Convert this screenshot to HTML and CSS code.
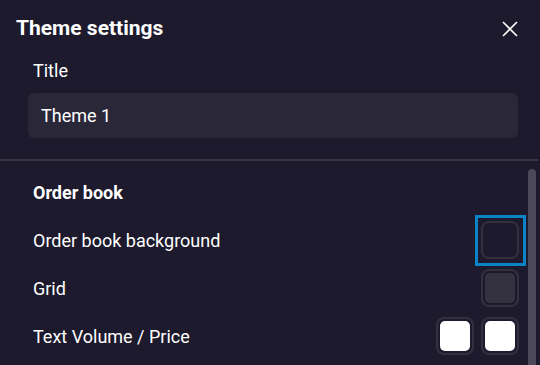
FILE: index.html
```html
<!DOCTYPE html>
<html>
<head>
<meta charset="utf-8">
<link rel="stylesheet" href="styles.css">
</head>
<body>
<div class="dialog">
  <div class="header">
    <h1 class="heading">Theme settings</h1>
    <button class="close" aria-label="Close">
      <svg width="16" height="16" viewBox="0 0 16 16"><path d="M1 1L15 15M15 1L1 15" stroke="#ffffff" stroke-width="1.6" fill="none"/></svg>
    </button>
  </div>
  <div class="title-block">
    <div class="label">Title</div>
    <div class="input">Theme 1</div>
  </div>
  <div class="separator"></div>
  <div class="body">
    <div class="rows">
      <div class="row"><span class="section">Order book</span></div>
      <div class="row">
        <span class="row-label">Order book background</span>
        <div class="swatches"><div class="swatch focused"><div class="fill fill-bg"></div></div></div>
      </div>
      <div class="row">
        <span class="row-label">Grid</span>
        <div class="swatches"><div class="swatch"><div class="fill fill-grid"></div></div></div>
      </div>
      <div class="row">
        <span class="row-label">Text Volume / Price</span>
        <div class="swatches">
          <div class="swatch"><div class="fill fill-white"></div></div>
          <div class="swatch"><div class="fill fill-white"></div></div>
        </div>
      </div>
    </div>
    <div class="scrollbar"><div class="thumb"></div></div>
  </div>
</div>
</body>
</html>
```

FILE: styles.css
```css
html, body {
  margin: 0;
  padding: 0;
  background: #1c1a2c;
  font-family: Roboto, "Liberation Sans", sans-serif;
  color: #ffffff;
  overflow: hidden;
}
.dialog {
  width: 540px;
  height: 365px;
  display: flex;
  flex-direction: column;
  background: #1c1a2c;
}
.header {
  display: flex;
  align-items: flex-start;
  justify-content: space-between;
  padding: 16px 22px 0 16px;
}
.heading {
  margin: 0;
  font-size: 21px;
  line-height: 24px;
  font-weight: 700;
}
.close {
  background: none;
  border: 0;
  padding: 0;
  margin-top: 5px;
  width: 16px;
  height: 16px;
  display: block;
}
.close svg { display: block; }
.title-block {
  padding: 20px 22px 0 28px;
}
.label {
  padding-left: 5px;
  font-size: 18px;
  line-height: 21px;
}
.input {
  margin-top: 12px;
  height: 45px;
  box-sizing: border-box;
  padding: 12px 13px;
  background: #2a2738;
  border-radius: 6px;
  font-size: 18px;
  line-height: 21px;
}
.separator {
  margin-top: 21px;
  height: 2px;
  background: #383647;
  margin-right: 2px;
}
.body {
  flex: 1;
  display: flex;
  min-height: 0;
}
.rows {
  flex: 1;
  padding: 7px 0 0 33px;
}
.row {
  height: 48px;
  display: flex;
  align-items: center;
  justify-content: space-between;
  font-size: 18px;
  line-height: 21px;
}
.section {
  font-weight: 700;
}
.swatches {
  display: flex;
  gap: 7px;
}
.swatch {
  position: relative;
  width: 38px;
  height: 38px;
  box-sizing: border-box;
  border: 2px solid #33313f;
  border-radius: 8px;
  padding: 2px;
}
.swatch.focused::after {
  content: "";
  position: absolute;
  top: -8px;
  left: -8px;
  right: -9px;
  bottom: -9px;
  border: 3px solid #0a84c6;
}
.fill {
  width: 100%;
  height: 100%;
  border-radius: 5px;
}
.fill-bg { background: #1c1a2c; }
.fill-grid { background: #34323f; }
.fill-white { background: #ffffff; }
.scrollbar {
  width: 8px;
  margin: 8px 4px 0 9px;
}
.thumb {
  height: 100%;
  background: #4b4859;
  border-radius: 4px 4px 0 0;
}
```
